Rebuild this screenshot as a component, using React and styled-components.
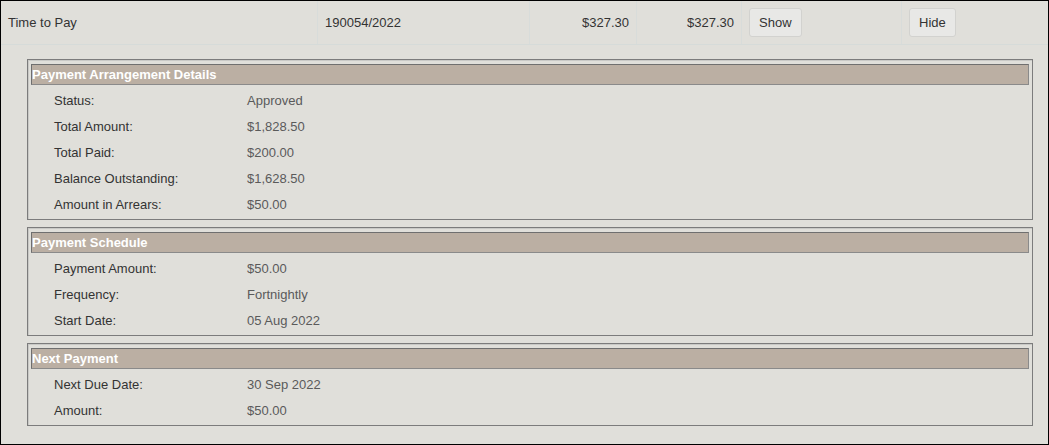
import React from 'react'
import styled, { createGlobalStyle } from 'styled-components'

const Global = createGlobalStyle`
    html, body {
        margin: 0;
        padding: 0;
        background: #e0dfda;
    }
    body {
        font-family: "Liberation Sans", Arial, sans-serif;
        font-size: 13px;
    }
`

const Frame = styled.div`
    box-sizing: border-box;
    width: 1049px;
    height: 445px;
    border: 1px solid #000;
    background: #e0dfda;
    color: #333;
`

const TopRow = styled.div`
    display: grid;
    grid-template-columns: 317px 212px 107px 105px 160px 1fr;
    height: 43px;
    border-bottom: 1px solid #d6dbd9;
`

const Cell = styled.div`
    display: flex;
    align-items: center;
    justify-content: ${p => (p.$right ? 'flex-end' : 'flex-start')};
    padding: 0 7px;
    border-right: ${p => (p.$last ? 'none' : '1px solid #d8dcda')};
    color: #333;
`

const Button = styled.button`
    font-family: "Liberation Sans", Arial, sans-serif;
    font-size: 13px;
    color: #333;
    height: 29px;
    padding: 0 9px;
    background: #e8e8e6;
    border: 1px solid #d2d2cf;
    border-radius: 3px;
`

const Sections = styled.div`
    display: flex;
    flex-direction: column;
    gap: 7px;
    padding: 14px 15px 0 26px;
`

const Fieldset = styled.section`
    border: 1px solid #7c7c7c;
    box-shadow: inset 1px 1px 0 #c9c9c6;
    padding: 4px 3px 2px 3px;
`

const Legend = styled.div`
    height: 19px;
    line-height: 19px;
    background: #bbafa3;
    border: 1px solid #6f6f6f;
    border-right-color: #8a8a8a;
    border-bottom-color: #8a8a8a;
    color: #fff;
    font-weight: bold;
    font-size: 13px;
`

const Rows = styled.div`
    padding: 2px 0 0 23px;
`

const Row = styled.div`
    display: grid;
    grid-template-columns: 193px 1fr;
    height: 26px;
    align-items: center;
    span:first-child {
        color: #333;
    }
    span:last-child {
        color: #5a5a5a;
    }
`

const sections = [
    {
        title: 'Payment Arrangement Details',
        rows: [
            ['Status:', 'Approved'],
            ['Total Amount:', '$1,828.50'],
            ['Total Paid:', '$200.00'],
            ['Balance Outstanding:', '$1,628.50'],
            ['Amount in Arrears:', '$50.00'],
        ],
    },
    {
        title: 'Payment Schedule',
        rows: [
            ['Payment Amount:', '$50.00'],
            ['Frequency:', 'Fortnightly'],
            ['Start Date:', '05 Aug 2022'],
        ],
    },
    {
        title: 'Next Payment',
        rows: [
            ['Next Due Date:', '30 Sep 2022'],
            ['Amount:', '$50.00'],
        ],
    },
]

const App = () => {
    return (
        <Frame>
            <Global />
            <TopRow>
                <Cell>Time to Pay</Cell>
                <Cell>190054/2022</Cell>
                <Cell $right>$327.30</Cell>
                <Cell $right>$327.30</Cell>
                <Cell><Button>Show</Button></Cell>
                <Cell $last><Button>Hide</Button></Cell>
            </TopRow>
            <Sections>
                {sections.map(s => (
                    <Fieldset key={s.title}>
                        <Legend>{s.title}</Legend>
                        <Rows>
                            {s.rows.map(([label, value]) => (
                                <Row key={label}>
                                    <span>{label}</span>
                                    <span>{value}</span>
                                </Row>
                            ))}
                        </Rows>
                    </Fieldset>
                ))}
            </Sections>
        </Frame>
    )
}

export default App
